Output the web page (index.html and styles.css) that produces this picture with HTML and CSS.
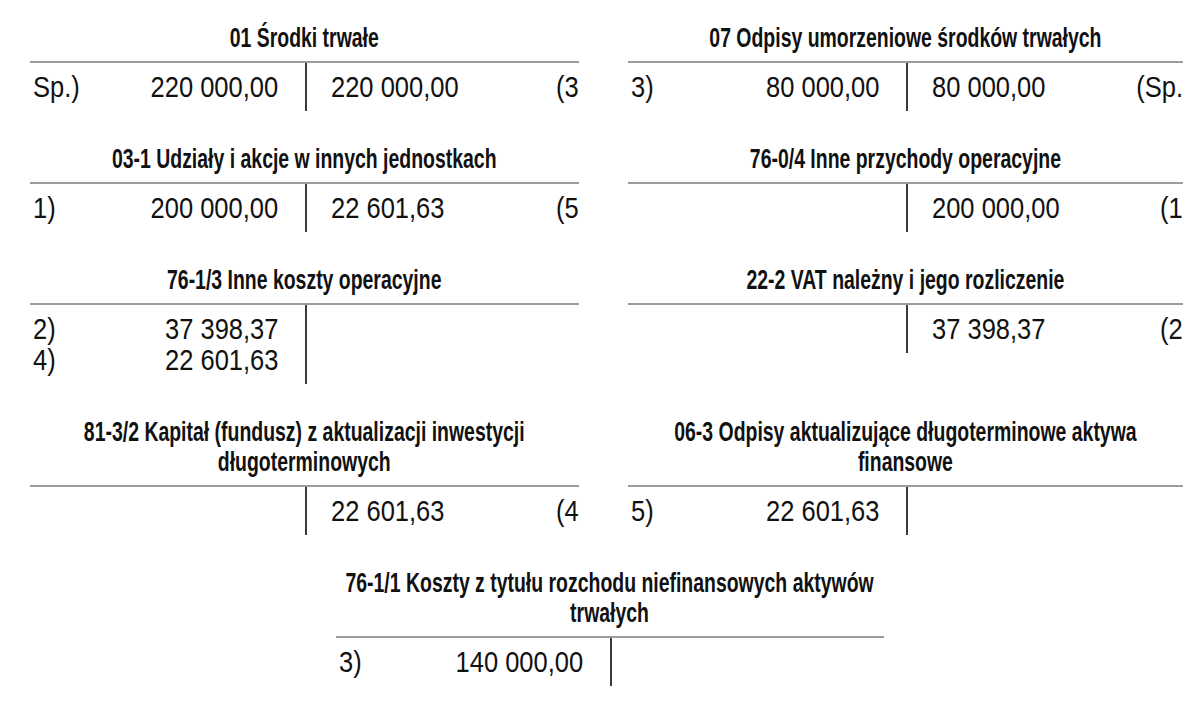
FILE: index.html
```html
<!DOCTYPE html>
<html lang="pl">
<head>
<meta charset="utf-8">
<title>Konta T</title>
<link rel="stylesheet" href="styles.css">
</head>
<body>
<main class="sheet">
  <section class="acct">
    <h2 class="title">01 Środki trwałe</h2>
    <div class="tbody">
      <div class="side debit">
        <div class="entry"><span class="ref">Sp.)</span><span class="amt">220 000,00</span></div>
      </div>
      <div class="side credit">
        <div class="entry"><span class="amt">220 000,00</span><span class="ref">(3</span></div>
      </div>
    </div>
  </section>

  <section class="acct">
    <h2 class="title">07 Odpisy umorzeniowe środków trwałych</h2>
    <div class="tbody">
      <div class="side debit">
        <div class="entry"><span class="ref">3)</span><span class="amt">80 000,00</span></div>
      </div>
      <div class="side credit">
        <div class="entry"><span class="amt">80 000,00</span><span class="ref">(Sp.</span></div>
      </div>
    </div>
  </section>

  <section class="acct">
    <h2 class="title">03-1 Udziały i akcje w innych jednostkach</h2>
    <div class="tbody">
      <div class="side debit">
        <div class="entry"><span class="ref">1)</span><span class="amt">200 000,00</span></div>
      </div>
      <div class="side credit">
        <div class="entry"><span class="amt">22 601,63</span><span class="ref">(5</span></div>
      </div>
    </div>
  </section>

  <section class="acct">
    <h2 class="title">76-0/4 Inne przychody operacyjne</h2>
    <div class="tbody">
      <div class="side debit"></div>
      <div class="side credit">
        <div class="entry"><span class="amt">200 000,00</span><span class="ref">(1</span></div>
      </div>
    </div>
  </section>

  <section class="acct">
    <h2 class="title">76-1/3 Inne koszty operacyjne</h2>
    <div class="tbody">
      <div class="side debit">
        <div class="entry"><span class="ref">2)</span><span class="amt">37 398,37</span></div>
        <div class="entry"><span class="ref">4)</span><span class="amt">22 601,63</span></div>
      </div>
      <div class="side credit"></div>
    </div>
  </section>

  <section class="acct">
    <h2 class="title">22-2 VAT należny i jego rozliczenie</h2>
    <div class="tbody">
      <div class="side debit"></div>
      <div class="side credit">
        <div class="entry"><span class="amt">37 398,37</span><span class="ref">(2</span></div>
      </div>
    </div>
  </section>

  <section class="acct">
    <h2 class="title">81-3/2 Kapitał (fundusz) z aktualizacji inwestycji długoterminowych</h2>
    <div class="tbody">
      <div class="side debit"></div>
      <div class="side credit">
        <div class="entry"><span class="amt">22 601,63</span><span class="ref">(4</span></div>
      </div>
    </div>
  </section>

  <section class="acct">
    <h2 class="title">06-3 Odpisy aktualizujące długoterminowe aktywa finansowe</h2>
    <div class="tbody">
      <div class="side debit">
        <div class="entry"><span class="ref">5)</span><span class="amt">22 601,63</span></div>
      </div>
      <div class="side credit"></div>
    </div>
  </section>

  <section class="acct acct-center">
    <h2 class="title">76-1/1 Koszty z tytułu rozchodu niefinansowych aktywów trwałych</h2>
    <div class="tbody">
      <div class="side debit">
        <div class="entry"><span class="ref">3)</span><span class="amt">140 000,00</span></div>
      </div>
      <div class="side credit"></div>
    </div>
  </section>
</main>
</body>
</html>
```

FILE: styles.css
```css
html, body {
  margin: 0;
  padding: 0;
  background: #ffffff;
  overflow: hidden;
}

body {
  font-family: "Liberation Sans", Arial, Helvetica, sans-serif;
  color: #111111;
}

.sheet {
  display: grid;
  grid-template-columns: 549px 555px;
  column-gap: 49px;
  row-gap: 33px;
  padding: 23px 0 0 30px;
  align-items: start;
}

.acct {
  display: flex;
  flex-direction: column;
}

.acct-center {
  grid-column: 1 / -1;
  justify-self: center;
  width: 548px;
  margin-left: 6px;
}

/* condensed bold heading: laid out wider, then squeezed to the account width */
.title {
  width: 138.89%;
  margin: 0 0 8px -19.445%;
  transform: scaleX(0.72);
  transform-origin: center top;
  font-size: 27px;
  line-height: 30px;
  font-weight: bold;
  text-align: center;
  color: #111111;
}

.tbody {
  display: grid;
  grid-template-columns: 1fr 1fr;
  border-top: 2px solid #9c9c9c;
}

.side {
  min-height: 31px;
  padding: 8px 0 9px;
}

.debit {
  padding-left: 3px;
  padding-right: 26px;
}

.credit {
  border-left: 2px solid #3a3a3a;
  padding-left: 24px;
  padding-right: 0;
}

.entry {
  display: flex;
  justify-content: space-between;
  font-size: 30px;
  line-height: 31px;
}

.entry span {
  display: inline-block;
  transform: scaleX(0.85);
}

.debit .ref,
.credit .amt {
  transform-origin: left center;
}

.debit .amt,
.credit .ref {
  transform-origin: right center;
}
```
